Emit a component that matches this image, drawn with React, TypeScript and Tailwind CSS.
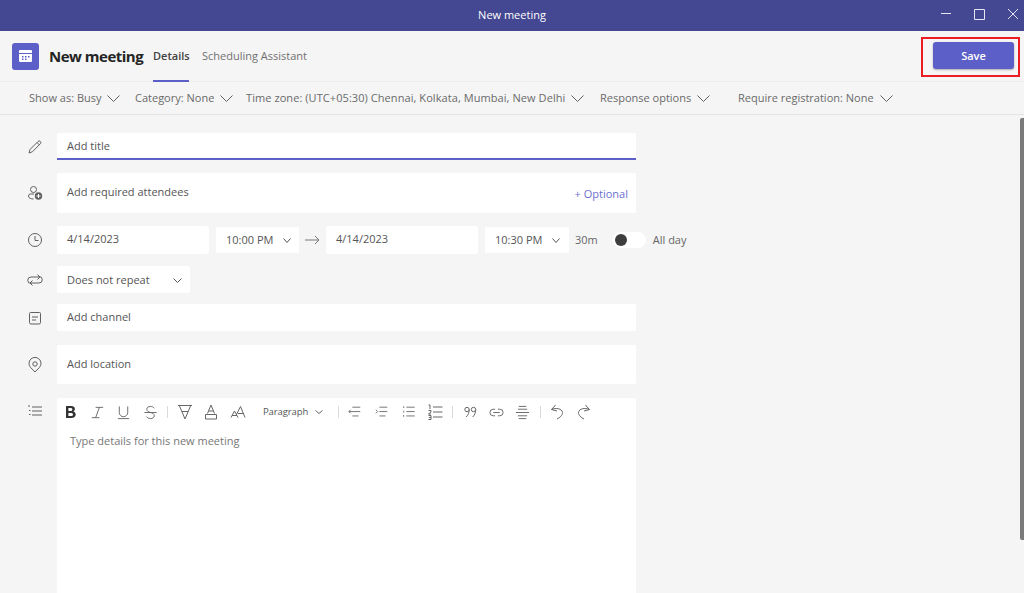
import { ReactNode } from "react";

const font = { fontFamily: '"Open Sans", "Noto Sans", sans-serif' };

const Icon = ({ children, size = 16, className = "" }: { children: ReactNode; size?: number; className?: string }) => (
  <svg width={size} height={size} viewBox="0 0 16 16" fill="none" stroke="currentColor" strokeWidth="1" className={className}>
    {children}
  </svg>
);

const Chevron = ({ w, h, className = "" }: { w: number; h: number; className?: string }) => (
  <svg width={w} height={h} viewBox={`0 0 ${w} ${h}`} fill="none" stroke="currentColor" strokeWidth="1" className={className}>
    <path d={`M0.500 0.500 L${w / 2} ${h - 0.5} L${w - 0.5} 0.500`} />
  </svg>
);

const options = [
  { label: "Show as: Busy", w: "w-[106px]" },
  { label: "Category: None", w: "w-[111px]" },
  { label: "Time zone: (UTC+05:30) Chennai, Kolkata, Mumbai, New Delhi", w: "w-[354px] tracking-[0.07px]" },
  { label: "Response options", w: "w-[138px]" },
  { label: "Require registration: None", w: "w-[155px]" },
];

const Sep = ({ className = "" }: { className?: string }) => <span className={`h-[12px] w-px bg-[#d9d9d9] ${className}`} />;

const Toolbar = () => (
  <div className="flex items-center h-[20px] text-[#666]">
    <span className="w-[27px] flex justify-center">
      <svg width="12" height="14" viewBox="0 0 12 14" fill="#333">
        <path d="M1 1h5.200c2.300 0 3.700 1.100 3.700 3 0 1.200-.7 2.200-1.800 2.600 1.500.3 2.600 1.400 2.600 3 0 2.200-1.700 3.400-4.200 3.400H1V1zm2.400 2v3h2.200c1.100 0 1.800-.6 1.800-1.500S6.700 3 5.600 3H3.400zm0 4.900V11h2.500c1.300 0 2.100-.6 2.100-1.600S7.200 7.900 5.900 7.900H3.400z" />
      </svg>
    </span>
    <span className="w-[26px] flex justify-center">
      <Icon size={15}><path d="M6 2.500h8M2 13.500h8M10 2.500 6 13.500" /></Icon>
    </span>
    <span className="w-[27px] flex justify-center">
      <Icon size={15}><path d="M3.500 1.500V8a4.500 4.500 0 0 0 9 0V1.500M2 14.500h12" /></Icon>
    </span>
    <span className="w-[26px] flex justify-center">
      <Icon size={15}><path d="M1.500 8h13M12 3.500C11.300 2.300 9.800 1.500 8 1.500c-2.300 0-4 1.200-4 3 0 2 2 3 4 3.500 2.200.5 4 1.500 4 3.500 0 1.900-1.800 3-4 3-1.900 0-3.500-.8-4.200-2.200" /></Icon>
    </span>
    <Sep className="ml-[4px]" />
    <span className="ml-[4px] w-[26px] flex justify-center">
      <Icon size={16}><path d="M1 1.500h14M2.500 2 8 15l5.500-13M5 7.500h6" /></Icon>
    </span>
    <span className="w-[26px] flex justify-center">
      <Icon size={16}><path d="M4.500 9.500 8 1l3.500 8.500M5.500 7h5M2.500 10.500h11v4.500h-11z" /></Icon>
    </span>
    <span className="w-[28px] flex justify-center">
      <Icon size={16}><path d="M1 13.500 4.500 7 8 13.500M2 11.500h5M6.500 10.500 10.500 2.500 15 13.500M8 9.500h5.500" /></Icon>
    </span>
    <span className="ml-[11px] w-[46px] text-[9.500px] text-[#555] whitespace-nowrap tracking-[-0.1px]">Paragraph</span>
    <Chevron w={8} h={4} className="ml-[6px]" />
    <Sep className="ml-[15px]" />
    <span className="ml-[2px] w-[27px] flex justify-center">
      <Icon size={14}><path d="M5 2.500h9M1 7.500h13M5 12.500h7M3 5.500l-2 2 2 2" /></Icon>
    </span>
    <span className="w-[27px] flex justify-center">
      <Icon size={14}><path d="M5 2.500h9M5 7.500h9M5 12.500h7M1 5.500l2 2-2 2" /></Icon>
    </span>
    <span className="w-[27px] flex justify-center">
      <Icon size={14}><path d="M5 2.500h9.500M5 7.500h9.500M5 12.500h9.500" /><path d="M1.500 2.500h1M1.500 7.500h1M1.500 12.500h1" strokeWidth="2" /></Icon>
    </span>
    <span className="w-[26px] flex justify-center">
      <Icon size={16}><path d="M6 3h9.500M6 8h9.500M6 13h9.500M1.500 1h1.500v4M1.500 6.500h2.500v1.500l-2.500 2h2.500M1.500 11.500h2.500v4h-2.500M2 13.500h2" /></Icon>
    </span>
    <Sep className="ml-[4px]" />
    <span className="ml-[4px] w-[26px] flex justify-center">
      <svg width="13" height="12" viewBox="0 0 13 12" fill="none" stroke="#666" strokeWidth="1">
        <circle cx="3" cy="3.500" r="2.200" />
        <path d="M5.200 3.500c0 3-1 5.500-3 7.500" />
        <circle cx="9.500" cy="3.500" r="2.200" />
        <path d="M11.700 3.500c0 3-1 5.500-3 7.500" />
      </svg>
    </span>
    <span className="w-[26px] flex justify-center">
      <Icon size={15}><path d="M6.500 4.500H4.500a3.500 3.500 0 0 0 0 7h2M9.500 4.500h2a3.500 3.500 0 0 1 0 7h-2M4.500 8h7" /></Icon>
    </span>
    <span className="w-[27px] flex justify-center">
      <Icon size={15}><path d="M4 1.500h8M3 4.500h10M1 8h14M3 11.500h10M4 14.500h8" /></Icon>
    </span>
    <Sep className="ml-[4px]" />
    <span className="ml-[4px] w-[24px] flex justify-center">
      <Icon size={16}><path d="M6.500 1 2.500 5.500 8 7M2.500 5.500C7 3.500 13 4.500 13.500 8.500c.2 2.500-2.500 5-5.500 6.500" /></Icon>
    </span>
    <span className="w-[29px] flex justify-center">
      <Icon size={16}><path d="M9.500 1l4 4.500L8 7M13.500 5.500C9 3.500 3 4.500 2.500 8.500c-.2 2.500 2.500 5 5.500 6.500" /></Icon>
    </span>
  </div>
);

const Row = ({ icon, children, mt, center = true }: { icon: ReactNode; children: ReactNode; mt: string; center?: boolean }) => (
  <div className={`flex ${center ? "items-center" : "items-start"} ${mt}`}>
    <div className="w-[57px] pl-[27px] text-[#616161] flex shrink-0">{icon}</div>
    {children}
  </div>
);

const TimeBox = ({ value, w }: { value: string; w: string }) => (
  <div className={`${w} h-[26px] bg-white rounded-[2px] flex items-center pl-[10px] text-[#555]`}>
    <span className="w-[57px] whitespace-nowrap">{value}</span>
    <Chevron w={8} h={5} />
  </div>
);

export default function App() {
  return (
    <div style={font} className="relative w-[1024px] h-[593px] overflow-hidden bg-[#f5f5f5] text-[11px]">
      {/* Title bar */}
      <div className="relative h-[31px] bg-[#444791] flex items-center justify-center text-white text-[11px] font-medium">
        New meeting
        <div className="absolute right-[5px] top-[8px] flex items-start gap-[22px] text-[#e6e6f2]">
          <svg width="12" height="12" viewBox="0 0 12 12" fill="none" stroke="currentColor"><path d="M2 5.500h10" /></svg>
          <svg width="12" height="12" viewBox="0 0 12 12" fill="none" stroke="currentColor"><path d="M1.500 1.500h10v10h-10z" /></svg>
          <svg width="12" height="12" viewBox="0 0 12 12" fill="none" stroke="currentColor"><path d="M1 1l10 10M11 1 1 11" /></svg>
        </div>
      </div>

      {/* Header */}
      <div className="h-[51px] flex items-center border-b border-[#ececec] pl-[12px] pr-[4px]">
        <div className="w-[27px] h-[27px] rounded-[3px] bg-[#5b5fc7] flex items-center justify-center">
          <svg width="15" height="14" viewBox="0 0 15 14" fill="#fff">
            <path d="M2 1h11a1 1 0 0 1 1 1v2H1V2a1 1 0 0 1 1-1z" />
            <path fillRule="evenodd" d="M1 5h13v7a1 1 0 0 1-1 1H2a1 1 0 0 1-1-1V5zm3 2v1.500h1.500V7H4zm3 0v1.500h1.500V7H7zm3 0v1.500h1.500V7H10zM4 9.500V11h1.500V9.500H4zm3 0V11h1.500V9.500H7z" />
          </svg>
        </div>
        <span className="ml-[10px] w-[94px] text-[15px] font-bold text-[#242424] tracking-[-0.5px] whitespace-nowrap">New meeting</span>
        <div className="ml-[10px] w-[36px] h-[51px] flex flex-col justify-center pt-[1px] relative font-semibold text-[#424242]">
          Details
          <div className="absolute left-0 right-0 bottom-0 h-[2px] bg-[#5b5fc7]" />
        </div>
        <span className="ml-[13px] pt-[1px] text-[#717171]">Scheduling Assistant</span>
        <div className="ml-auto self-start mt-[6px] border-2 border-[#ed1c24] h-[40px] w-[99px] flex items-start pl-[10px] pt-[3px]">
          <div className="w-[81px] h-[27px] pt-px rounded-[3px] bg-[#5b5fc7] shadow-[0_1px_2px_rgba(0,0,0,0.3)] text-white font-semibold flex items-center justify-center">
            Save
          </div>
        </div>
      </div>

      {/* Options */}
      <div className="h-[33px] flex items-center pl-[29px] border-b border-[#e4e4e4] text-[#6a6a6a]">
        {options.map((o) => (
          <div key={o.label} className={`flex items-center ${o.w} whitespace-nowrap`}>
            {o.label}
            <Chevron w={13} h={7} className="ml-[6px] text-[#616161]" />
          </div>
        ))}
      </div>

      {/* Form */}
      <div className="text-[#555]">
        <Row
          mt="mt-[18px]"
          icon={<Icon size={16}><path d="M3 10.500 11 2.500a1.600 1.600 0 0 1 2.400 2.200L5.500 12.700 2 14z M10 3.500l2.500 2.500" /></Icon>}
        >
          <div className="w-[579px] h-[27px] pt-px bg-white rounded-t-[2px] border-b-2 border-[#5b5fc7] flex items-center pl-[10px]">Add title</div>
        </Row>

        <Row
          mt="mt-[13px]"
          icon={
            <svg width="16" height="16" viewBox="0 0 16 16" fill="none" stroke="currentColor">
              <circle cx="6.500" cy="4.500" r="3" />
              <path d="M7 9H3.500A2 2 0 0 0 1.500 11c0 2 2.300 3 5 3" />
              <circle cx="11.500" cy="11" r="3.700" fill="currentColor" stroke="none" />
              <path d="M11.500 9v4M9.500 11h4" stroke="#fff" />
            </svg>
          }
        >
          <div className="relative w-[579px] h-[40px] bg-white rounded-[2px] pl-[10px] pt-[11px]">
            Add required attendees
            <span className="absolute right-[8px] top-[13px] text-[#6b6fcf]">+ Optional</span>
          </div>
        </Row>

        <Row
          mt="mt-[13px]"
          icon={<Icon size={16}><circle cx="8" cy="8" r="6.500" /><path d="M8 4v4.500h3.500" /></Icon>}
        >
          <div className="w-[152px] h-[28px] pb-px bg-white rounded-[2px] flex items-center pl-[10px]">4/14/2023</div>
          <div className="ml-[7px]"><TimeBox value="10:00 PM" w="w-[83px]" /></div>
          <svg width="15" height="10" viewBox="0 0 15 10" fill="none" stroke="#777" className="mx-[6px]"><path d="M0 5h14M10 1l4 4-4 4" /></svg>
          <div className="w-[152px] h-[28px] pb-px bg-white rounded-[2px] flex items-center pl-[10px]">4/14/2023</div>
          <div className="ml-[7px]"><TimeBox value="10:30 PM" w="w-[84px]" /></div>
          <span className="ml-[6px] mt-px text-[#666]">30m</span>
          <div className="ml-[15px] w-[33px] h-[16px] rounded-full bg-white flex items-center pl-[2px]">
            <div className="w-[12px] h-[12px] rounded-full bg-[#3d3d3d]" />
          </div>
          <span className="ml-[7px] mt-px text-[#666]">All day</span>
        </Row>

        <Row
          mt="mt-[12px]"
          icon={<Icon size={16}><path d="M4.500 11.500H4A3 3 0 0 1 4 5h8.500M10.500 2.500 13 5l-2.500 2.500M11.500 4.500H12A3 3 0 0 1 12 11H3.500M5.500 8.500 3 11l2.500 2.500" /></Icon>}
        >
          <div className="w-[133px] h-[27px] pt-px bg-white rounded-[2px] flex items-center pl-[10px]">
            Does not repeat
            <Chevron w={9} h={5} className="ml-auto mr-[8px]" />
          </div>
        </Row>

        <Row
          mt="mt-[11px]"
          icon={<Icon size={16}><path d="M3.500 2.500h9a1 1 0 0 1 1 1v9a1.500 1.500 0 0 1-1.500 1.500H4a1.500 1.500 0 0 1-1.500-1.500v-9a1 1 0 0 1 1-1zM5 7h6M5 10h4" /></Icon>}
        >
          <div className="w-[579px] h-[27px] bg-white rounded-[2px] flex items-center pl-[10px]">Add channel</div>
        </Row>

        <Row
          mt="mt-[14px]"
          icon={<Icon size={16}><path d="M8 15 3.600 10.500a6 6 0 1 1 8.800 0z" /><circle cx="8" cy="7" r="2.200" /></Icon>}
        >
          <div className="w-[579px] h-[39px] bg-white rounded-[2px] flex items-center pl-[10px]">Add location</div>
        </Row>

        <Row
          mt="mt-[14px]"
          center={false}
          icon={<Icon size={16} className="mt-[5px]"><path d="M5 4h10M5 8h10M5 12h10" /><path d="M1 3h2M2 7.500h1.500M2 11.500h1.500" /></Icon>}
        >
          <div className="w-[579px] h-[200px] bg-white rounded-t-[2px] pt-[4px]">
            <Toolbar />
            <p className="mt-[11px] ml-[13px] text-[#777]">Type details for this new meeting</p>
          </div>
        </Row>
      </div>

      {/* Scrollbar */}
      <div className="absolute right-0 top-[118px] w-[4px] h-[422px] bg-[#7a7a7a] rounded-l-[2px]" />
    </div>
  );
}
